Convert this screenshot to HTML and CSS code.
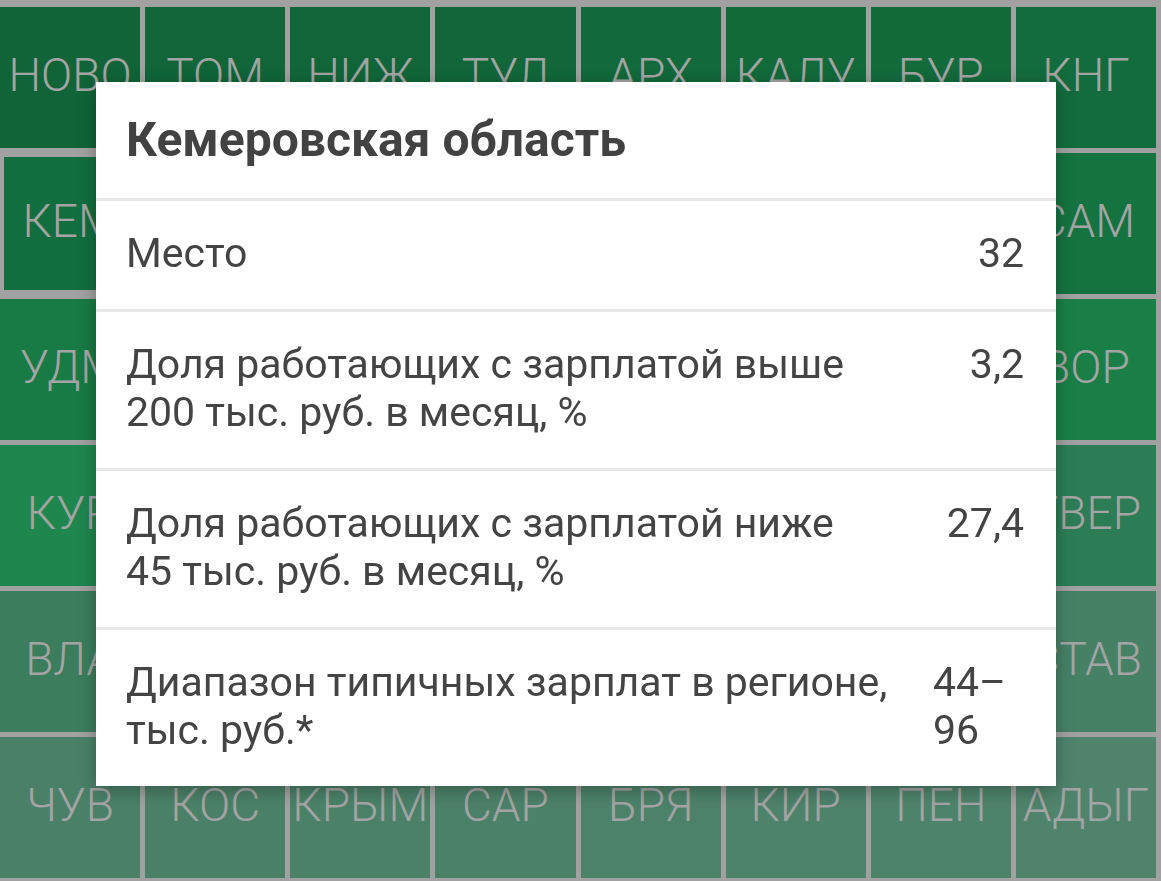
FILE: index.html
```html
<!DOCTYPE html>
<html lang="ru">
<head>
  <meta charset="UTF-8">
  <meta name="viewport" content="width=device-width,initial-scale=1.0">
  <title>Зарплаты по регионам</title>
  <link rel="stylesheet" href="styles.css">
</head>
<body>

  <!-- regions, ranked; background colour comes from the rank -->
  <div class="board">
    <div class="tile" style="background:#106438">НОВО</div>
    <div class="tile" style="background:#106539">ТОМ</div>
    <div class="tile" style="background:#116639">НИЖ</div>
    <div class="tile" style="background:#11673a">ТУЛ</div>
    <div class="tile" style="background:#12693b">АРХ</div>
    <div class="tile" style="background:#126a3b">КАЛУ</div>
    <div class="tile" style="background:#136b3c">БУР</div>
    <div class="tile" style="background:#136c3d">КНГ</div>

    <div class="tile selected" style="background:#126e3e">КЕМ</div>
    <div class="tile" style="background:#126f3e">ЯРО</div>
    <div class="tile" style="background:#13703f">ОРЕ</div>
    <div class="tile" style="background:#13703f">РЯЗ</div>
    <div class="tile" style="background:#14713f">ВОЛГ</div>
    <div class="tile" style="background:#147240">ОМС</div>
    <div class="tile" style="background:#157240">ПРИ</div>
    <div class="tile" style="background:#157341">САМ</div>

    <div class="tile" style="background:#187a44">УДМ</div>
    <div class="tile" style="background:#187b44">ЛИП</div>
    <div class="tile" style="background:#187b44">КРА</div>
    <div class="tile" style="background:#197c45">ИРК</div>
    <div class="tile" style="background:#197d45">ВОЛО</div>
    <div class="tile" style="background:#197e45">БЕЛ</div>
    <div class="tile" style="background:#1a7e46">АЛТ</div>
    <div class="tile" style="background:#1a7f46">ВОР</div>

    <div class="tile" style="background:#1f864e">КУР</div>
    <div class="tile" style="background:#21854f">СМО</div>
    <div class="tile" style="background:#238350">ПСК</div>
    <div class="tile" style="background:#258251">ИВА</div>
    <div class="tile" style="background:#268152">ОРЛ</div>
    <div class="tile" style="background:#288053">ТАМ</div>
    <div class="tile" style="background:#2a7f55">ЛЕН</div>
    <div class="tile" style="background:#2c7d56">ТВЕР</div>

    <div class="tile" style="background:#3b7d5c">ВЛА</div>
    <div class="tile" style="background:#3d7e5d">МАР</div>
    <div class="tile" style="background:#3e7e5f">МОР</div>
    <div class="tile" style="background:#407f60">УЛЬ</div>
    <div class="tile" style="background:#417f61">КАБ</div>
    <div class="tile" style="background:#438063">КУРГ</div>
    <div class="tile" style="background:#448064">АСТ</div>
    <div class="tile" style="background:#468166">СТАВ</div>

    <div class="tile" style="background:#4a8068">ЧУВ</div>
    <div class="tile" style="background:#4b8068">КОС</div>
    <div class="tile" style="background:#4b8169">КРЫМ</div>
    <div class="tile" style="background:#4c8169">САР</div>
    <div class="tile" style="background:#4d826a">БРЯ</div>
    <div class="tile" style="background:#4d826b">КИР</div>
    <div class="tile" style="background:#4e836b">ПЕН</div>
    <div class="tile" style="background:#4f836c">АДЫГ</div>
  </div>

  <div class="dialog">
    <h2 class="dialog-title">Кемеровская область</h2>

    <div class="stat">
      <div class="stat-label">Место</div>
      <div class="stat-value">32</div>
    </div>
    <div class="stat">
      <div class="stat-label">Доля работающих с зарплатой выше<br>200 тыс. руб. в месяц, %</div>
      <div class="stat-value">3,2</div>
    </div>
    <div class="stat">
      <div class="stat-label">Доля работающих с зарплатой ниже<br>45 тыс. руб. в месяц, %</div>
      <div class="stat-value">27,4</div>
    </div>
    <div class="stat">
      <div class="stat-label">Диапазон типичных зарплат в регионе,<br>тыс. руб.*</div>
      <div class="stat-value">44–96</div>
    </div>
  </div>

</body>
</html>
```

FILE: styles.css
```css
/* tile board + region dialog */
body {
  margin: 0;
  background: #a1a1a1;
  font-family: Roboto, "Noto Sans", Arial, sans-serif;
  overflow: hidden;
}

.board {
  display: grid;
  grid-template-columns: repeat(8, 1fr);
  grid-auto-rows: 141px;
  gap: 5px;
  padding: 7px 5px 0 0;
}
.tile {
  display: flex;
  align-items: center;
  justify-content: center;
  overflow: hidden;
  padding-bottom: 6px;
  color: #a4a4a4;
  font-size: 46px;
  font-weight: 300;
  white-space: nowrap;
}
.tile.selected {
  box-shadow: inset 0 0 0 4px #a1a1a1;
}

.dialog {
  position: fixed;
  left: 96px;
  top: 82px;
  width: 960px;
  background: #fff;
  color: #444;
  box-shadow: 0 4px 16px rgba(0, 0, 0, 0.3);
}
.dialog-title {
  margin: 0;
  padding: 30px 32px 30px 30px;
  font-size: 48px;
  line-height: 56px;
  font-weight: 700;
  color: #424242;
}
.stat {
  display: grid;
  grid-template-columns: 1fr 91px;
  column-gap: 24px;
  padding: 28px 32px 32px 30px;
  border-top: 3px solid #e8e8e8;
  font-size: 41px;
  line-height: 48px;
}
.stat-value {
  justify-self: end;
}
```
